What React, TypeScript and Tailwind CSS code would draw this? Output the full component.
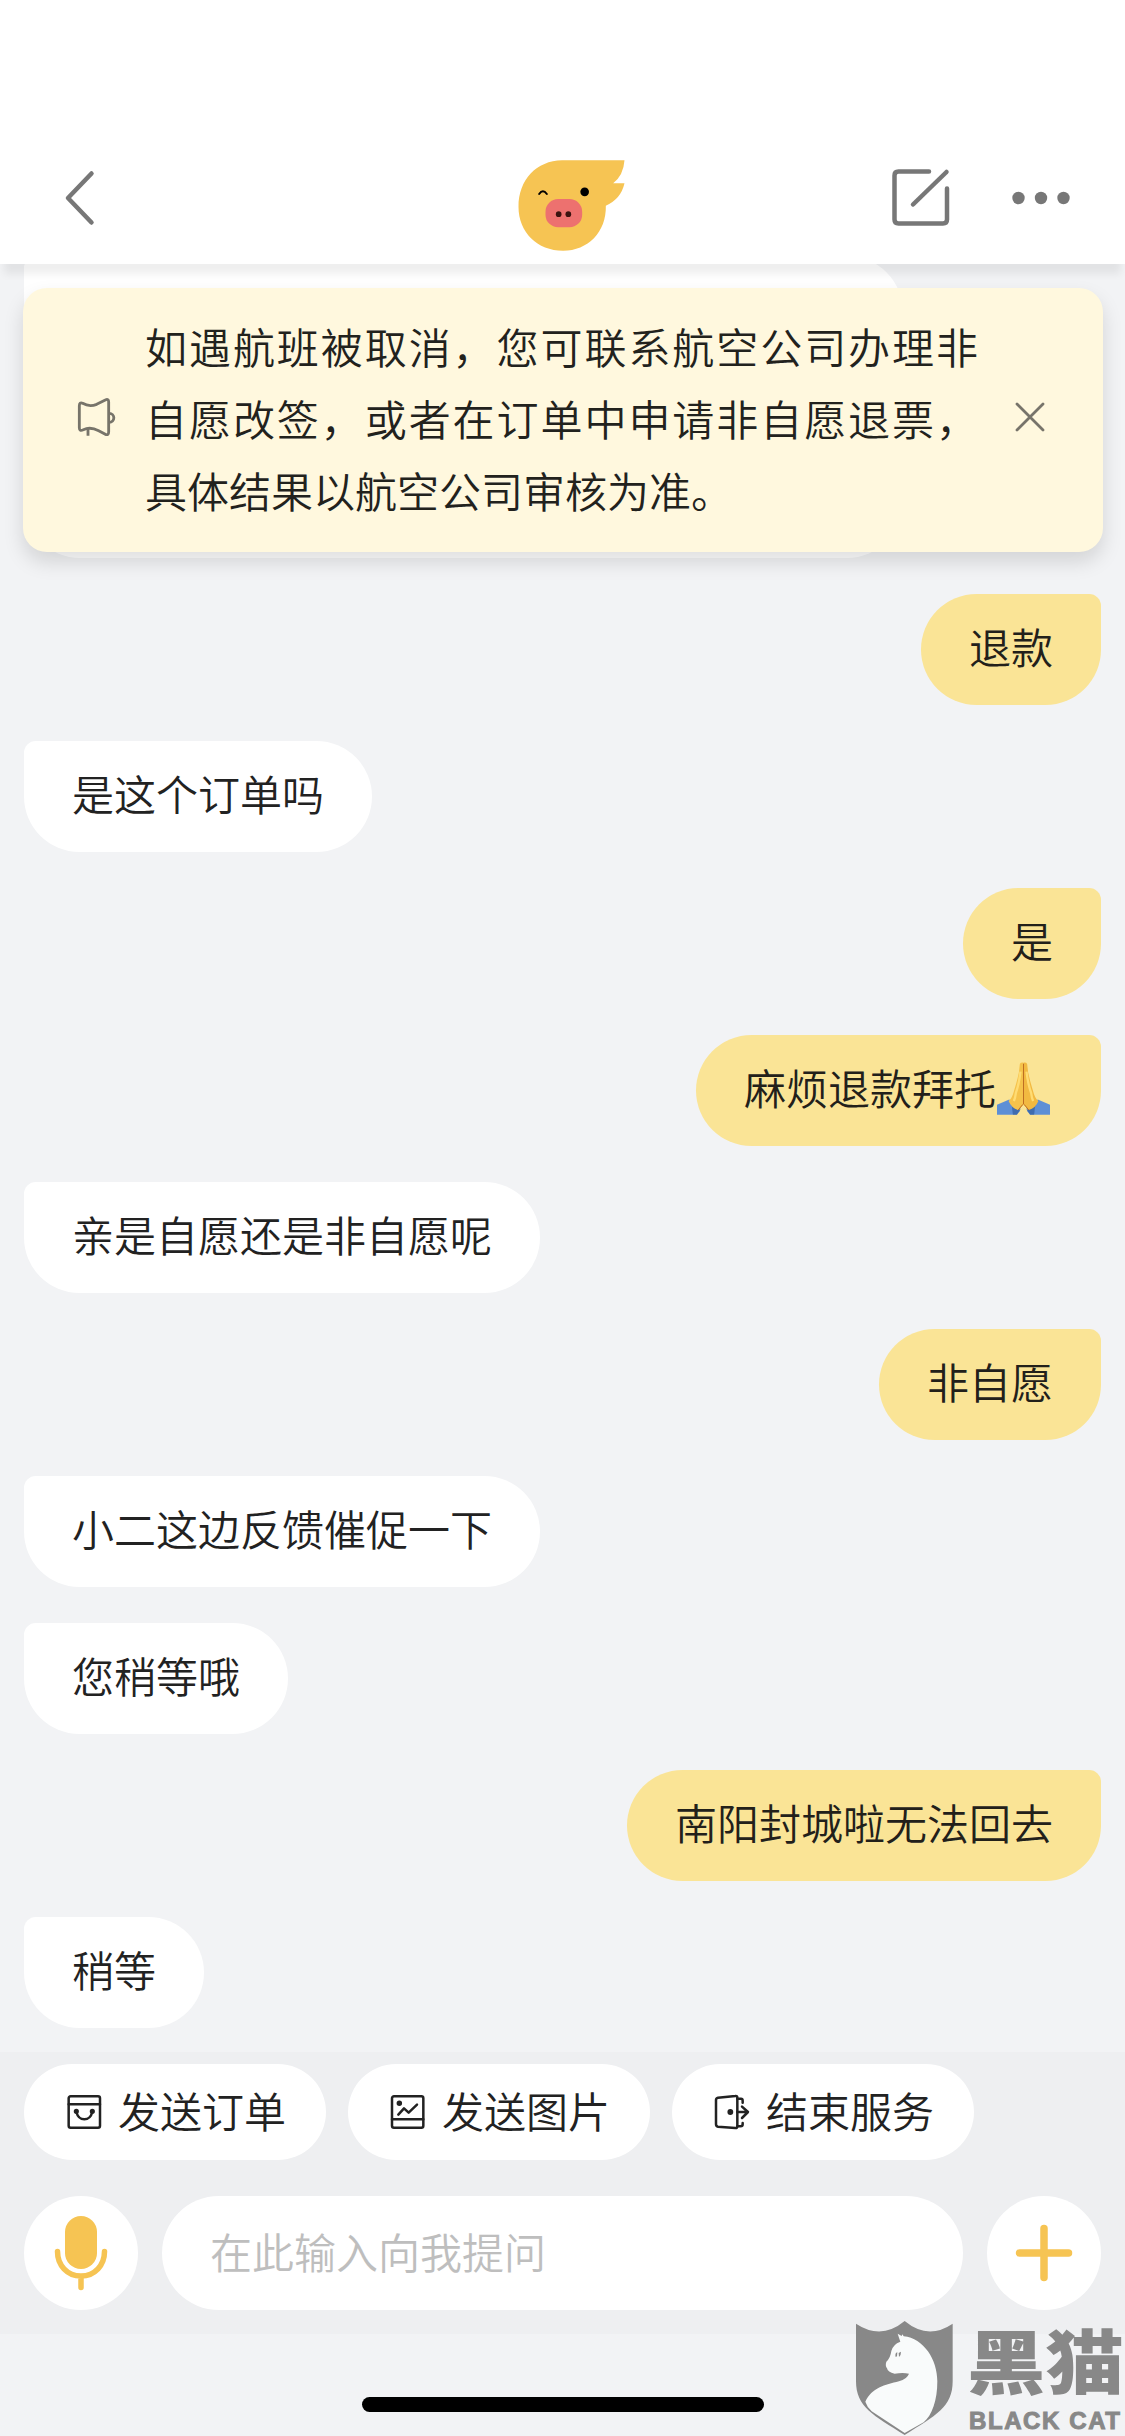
import { useState } from "react";

type Message = {
  from: "me" | "agent";
  text: string;
  praying?: boolean;
};

const messages: Message[] = [
  { from: "me", text: "退款" },
  { from: "agent", text: "是这个订单吗" },
  { from: "me", text: "是" },
  { from: "me", text: "麻烦退款拜托", praying: true },
  { from: "agent", text: "亲是自愿还是非自愿呢" },
  { from: "me", text: "非自愿" },
  { from: "agent", text: "小二这边反馈催促一下" },
  { from: "agent", text: "您稍等哦" },
  { from: "me", text: "南阳封城啦无法回去" },
  { from: "agent", text: "稍等" },
];

const actions = [
  { label: "发送订单", icon: OrderIcon },
  { label: "发送图片", icon: PictureIcon },
  { label: "结束服务", icon: ExitIcon },
];

export default function App() {
  const [noticeOpen, setNoticeOpen] = useState(true);
  const [draft, setDraft] = useState("");

  return (
    <div className="relative flex h-[2436px] w-[1125px] flex-col overflow-hidden bg-[#f2f3f5] font-['Noto_Sans_CJK_SC',sans-serif] text-[42px] font-[350] text-[#222]">
      <Header />

      {noticeOpen && <Notice onClose={() => setNoticeOpen(false)} />}

      {/* Messages */}
      <main className="-mt-2 flex flex-1 flex-col gap-9 px-6">
        <div className="h-[302px] w-[879px] shrink-0 rounded-[56px] rounded-tl-xl bg-white" />
        {messages.map((message) => (
          <Bubble key={message.text} message={message} />
        ))}
      </main>

      {/* Composer */}
      <footer className="h-[282px] shrink-0 bg-[#eeeff1] px-6 pt-3">
        <div className="flex gap-[22px]">
          {actions.map(({ label, icon: Icon }) => (
            <button key={label} className="flex h-24 w-[302px] items-center rounded-full bg-white pl-[42px] leading-none">
              <Icon />
              <span className="ml-4 pb-1">{label}</span>
            </button>
          ))}
        </div>
        <div className="mt-9 flex gap-6">
          <button className="flex size-[114px] items-center justify-center rounded-full bg-white">
            <MicIcon />
          </button>
          <input
            className="h-[114px] min-w-0 flex-1 rounded-full bg-white px-12 pb-1.5 outline-none placeholder:text-[#bebebe]"
            placeholder="在此输入向我提问"
            value={draft}
            onChange={(e) => setDraft(e.target.value)}
          />
          <button className="flex size-[114px] items-center justify-center rounded-full bg-white">
            <svg width="58" height="58" viewBox="0 0 58 58" stroke="#f6c453" strokeWidth="7.500" strokeLinecap="round">
              <path d="M29 4.500v49M4.500 29h49" />
            </svg>
          </button>
        </div>
      </footer>

      {/* Home indicator */}
      <div className="flex h-[102px] shrink-0 items-end justify-center pb-6">
        <div className="h-[15px] w-[402px] rounded-full bg-black" />
      </div>

      <Watermark />
    </div>
  );
}

function Header() {
  return (
    <header className="relative z-10 grid h-[264px] shrink-0 grid-cols-[1fr_auto_1fr] items-center bg-white pt-[132px] shadow-[0_14px_8px_-4px_rgba(0,0,0,0.065)]">
      <button className="ml-[62px] w-9">
        <svg width="36" height="60" viewBox="0 0 36 60" fill="none" stroke="#777" strokeWidth="4.500" strokeLinecap="round" strokeLinejoin="round">
          <path d="M29.500 5.500 6 30l23.500 24.500" />
        </svg>
      </button>
      <svg width="126" height="110" viewBox="58.500 39 378 330">
        <path
          d="M245 91H432Q429 136 398 160H432Q421 208 376 227C378 306 322 362 248 362C170 362 114 306 114 230C114 150 168 92 245 91Z"
          fill="#f6c453"
        />
        <path d="M176 192Q187 176 199 192" fill="none" stroke="#000" strokeWidth="6" strokeLinecap="round" />
        <circle cx="312.500" cy="185.500" r="13" />
        <rect x="195" y="207" width="110" height="85" rx="38" fill="#ed716f" />
        <circle cx="234.500" cy="252.500" r="8.500" fill="#3b120f" />
        <circle cx="263.500" cy="252.500" r="8.500" fill="#3b120f" />
      </svg>
      <div className="flex items-center justify-end gap-[60px] pr-[54px]">
        <svg width="60" height="60" viewBox="0 0 60 60" fill="none" stroke="#777" strokeWidth="4.500" strokeLinecap="round" strokeLinejoin="round">
          <path d="M38 3.500H7.500q-4 0-4 4v44q0 4 4 4h44.500q4 0 4-4V20.500" />
          <path d="M22 36.500 55.500 4" />
        </svg>
        <svg width="60" height="14" viewBox="0 0 60 14" fill="#777">
          <circle cx="7.500" cy="7" r="6.200" />
          <circle cx="30" cy="7" r="6.200" />
          <circle cx="52.500" cy="7" r="6.200" />
        </svg>
      </div>
    </header>
  );
}

function Notice({ onClose }: { onClose: () => void }) {
  return (
    <section className="absolute left-[23px] top-72 z-20 flex h-[264px] w-[1080px] items-center rounded-3xl bg-[#fff8de] pb-1 pl-[53px] shadow-[0_10px_20px_rgba(0,0,0,0.13)]">
      <svg className="-mt-0.5 shrink-0" width="42" height="42" viewBox="228 768 126 126" fill="none" stroke="#77746a" strokeWidth="8.500" strokeLinejoin="round">
        <path d="M238 797q0-11 10-7q20 12 42 3l26-13q10-5 10 6v89q0 12-10 8l-20-11q-25-13-46-3q-12 6-12-6z" />
        <path d="M264 867v20M328 820a13 13 0 0 1 0 27" />
      </svg>
      <p className="ml-[27px] w-[833px] text-justify leading-[72px] text-[#22221d]">
        如遇航班被取消，您可联系航空公司办理非自愿改签，或者在订单中申请非自愿退票，具体结果以航空公司审核为准。
      </p>
      <button className="-mt-0.5 ml-[35px]" onClick={onClose}>
        <svg width="34" height="34" viewBox="0 0 34 34" stroke="#77746a" strokeWidth="2.800" strokeLinecap="round">
          <path d="M4 4 30 30M30 4 4 30" />
        </svg>
      </button>
    </section>
  );
}

function Bubble({ message }: { message: Message }) {
  const mine = message.from === "me";
  return (
    <div
      className={`flex h-[111px] shrink-0 items-center rounded-[56px] px-12 leading-none ${
        mine ? "self-end rounded-tr-xl bg-[#fae496] text-[#22201a]" : "self-start rounded-tl-xl bg-white"
      }`}
    >
      <span className="pb-[7px]">{message.text}</span>
      {message.praying && <PrayingHands />}
    </div>
  );
}

function PrayingHands() {
  return (
    <svg className="-mt-1 ml-px mr-[3px]" width="53" height="53" viewBox="0 0 160 158">
      <path d="M0 128 37 112 70 146 60 158H0z" fill="#5d8fd6" />
      <path d="M160 128 123 112 90 146 100 158H160z" fill="#5d8fd6" />
      <path d="M44 124 72 140 60 158H48z" fill="#27518f" opacity=".55" />
      <path d="M116 124 88 140 100 158H112z" fill="#27518f" opacity=".55" />
      <path d="M69 5q2-5 11-4V128L64 144Q44 139 35 117 46 108 51 87 61 56 66 31z" fill="#f5c24b" />
      <path d="M91 5q-2-5-11-4V128L96 144Q116 139 125 117 114 108 109 87 99 56 94 31z" fill="#f2b941" />
      <path d="M71 28Q66 68 57 92 55 108 51 117M89 28Q94 68 103 92 105 108 109 117" fill="none" stroke="#ffdc73" strokeWidth="7" />
      <path d="M80 4V126M78 127 64 144M82 127 96 144" fill="none" stroke="#bd6d21" strokeWidth="3" />
    </svg>
  );
}

function OrderIcon() {
  return (
    <svg width="36" height="36" viewBox="0 0 108 108" fill="none" stroke="#222" strokeWidth="7.500" strokeLinecap="round">
      <rect x="8" y="7" width="94" height="94" rx="6" />
      <path d="M8 31h94M31 54q6 22 24 22t24-22" />
      <circle cx="31" cy="52" r="4" fill="#222" />
      <circle cx="79" cy="52" r="4" fill="#222" />
    </svg>
  );
}

function PictureIcon() {
  return (
    <svg width="36" height="36" viewBox="0 0 108 108" fill="none" stroke="#222" strokeWidth="7.500" strokeLinecap="round" strokeLinejoin="round">
      <rect x="6" y="7" width="94" height="94" rx="6" />
      <path d="M6 76h94M25 62 42 43 56 56 81 32" />
      <circle cx="28" cy="28" r="4.500" fill="#222" />
    </svg>
  );
}

function ExitIcon() {
  return (
    <svg width="36" height="36" viewBox="0 0 108 108" fill="none" stroke="#222" strokeWidth="7.500" strokeLinecap="round" strokeLinejoin="round">
      <path d="M6 18q0-6 6-7L64 6q6-1 6 5v86q0 6-6 5l-52-4q-6-1-6-7z" />
      <path d="M70 14h11q5 0 5 6v6M70 97h10q6 0 6-6v-4M70 54h31M84 38 102 54 84 72" />
      <circle cx="49" cy="54" r="5" fill="#222" />
    </svg>
  );
}

function MicIcon() {
  return (
    <svg width="54" height="76" viewBox="0 0 54 76" fill="none" stroke="#f6c453" strokeWidth="5.500" strokeLinecap="round">
      <rect x="11" y="1" width="32" height="53" rx="16" fill="#f6c453" stroke="none" />
      <path d="M3.500 36.500C3.500 50 13 61 27 61S50.500 50 50.500 36.500M27 61v11.500" />
    </svg>
  );
}

function Watermark() {
  return (
    <div className="absolute bottom-0 right-0 z-30 flex h-[116px] w-[270px] text-[#888]">
      <svg width="98" height="116" viewBox="46 31 294 348">
        <path d="M49 42Q125 92 195 34Q265 92 339 42V215C339 292 288 318 195 376C102 318 49 292 49 215Z" fill="#888" />
        <path
          d="M174 72 186 79 188 74 192 80C252 86 293 150 293 215C293 272 277 318 252 338L195 370 96 305Q82 292 77 276C96 235 136 225 178 215Q202 208 208 192Q190 188 165 192 144 188 142 176 136 168 140 156 152 146 155 124 160 104 182 96Z"
          fill="#f9fbfb"
        />
        <path d="M168 142Q165 130 173 128L172 140ZM177 130l7-4q0 12-6 16Z" fill="#888" />
      </svg>
      <div className="ml-[14px] flex flex-col whitespace-nowrap">
        <div className="h-[87px] origin-left scale-x-[1.12] pt-1.5 text-[70px] font-black leading-[66px]">黑猫</div>
        <div className="font-['Liberation_Sans',sans-serif] pl-0.5 text-[24px] font-bold leading-[28px] tracking-[1.600px] [-webkit-text-stroke:1px_#888]">
          BLACK CAT
        </div>
      </div>
    </div>
  );
}
